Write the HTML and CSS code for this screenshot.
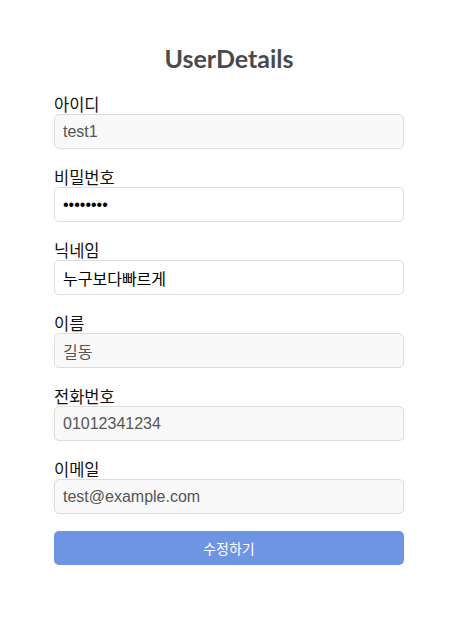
FILE: index.html
```html
<!DOCTYPE html>
<html lang="ko">
<head>
<meta charset="utf-8">
<link rel="stylesheet" href="styles.css">
</head>
<body>
<div class="container">
  <h2 class="title">UserDetails</h2>
  <form class="form">
    <div class="field">
      <label class="label">아이디</label>
      <input class="input readonly" type="text" value="test1" readonly>
    </div>
    <div class="field">
      <label class="label">비밀번호</label>
      <input class="input" type="password" value="password">
    </div>
    <div class="field">
      <label class="label">닉네임</label>
      <input class="input" type="text" value="누구보다빠르게">
    </div>
    <div class="field">
      <label class="label">이름</label>
      <input class="input readonly" type="text" value="길동" readonly>
    </div>
    <div class="field">
      <label class="label">전화번호</label>
      <input class="input readonly" type="text" value="01012341234" readonly>
    </div>
    <div class="field">
      <label class="label">이메일</label>
      <input class="input readonly" type="text" value="test@example.com" readonly>
    </div>
    <button class="button" type="button">수정하기</button>
  </form>
</div>
</body>
</html>
```
FILE: styles.css
```css
html, body {
  margin: 0;
  padding: 0;
  background: #ffffff;
}
body {
  font-family: "Liberation Sans", "Noto Sans CJK KR", sans-serif;
}
.container {
  width: 350px;
  margin-left: 54px;
  padding-top: 43px;
}
.title {
  margin: 0 0 22px 0;
  text-align: center;
  font-family: Lato, "Noto Sans", sans-serif;
  font-weight: 700;
  font-size: 25px;
  line-height: 30px;
  color: #4a4a4a;
}
.form {
  display: flex;
  flex-direction: column;
}
.field {
  display: flex;
  flex-direction: column;
  margin-bottom: 19px;
}
.label {
  font-family: "Noto Sans CJK KR", sans-serif;
  font-size: 16.5px;
  line-height: 19px;
  color: #111;
}
.input {
  box-sizing: border-box;
  width: 350px;
  height: 35px;
  margin: 0;
  padding: 0 8px;
  border: 1px solid #dddddd;
  border-radius: 5px;
  background: #ffffff;
  font-family: "Liberation Sans", "Noto Sans CJK KR", sans-serif;
  font-size: 16px;
  color: #000;
  outline: none;
}
.input.readonly {
  background: #f9f9f9;
  color: #555;
}
.button {
  box-sizing: border-box;
  width: 350px;
  height: 34px;
  margin-top: -2px;
  border: none;
  border-radius: 5px;
  background: #6e95e4;
  color: #fff;
  font-family: "Noto Sans CJK KR", sans-serif;
  font-size: 14px;
}
```
